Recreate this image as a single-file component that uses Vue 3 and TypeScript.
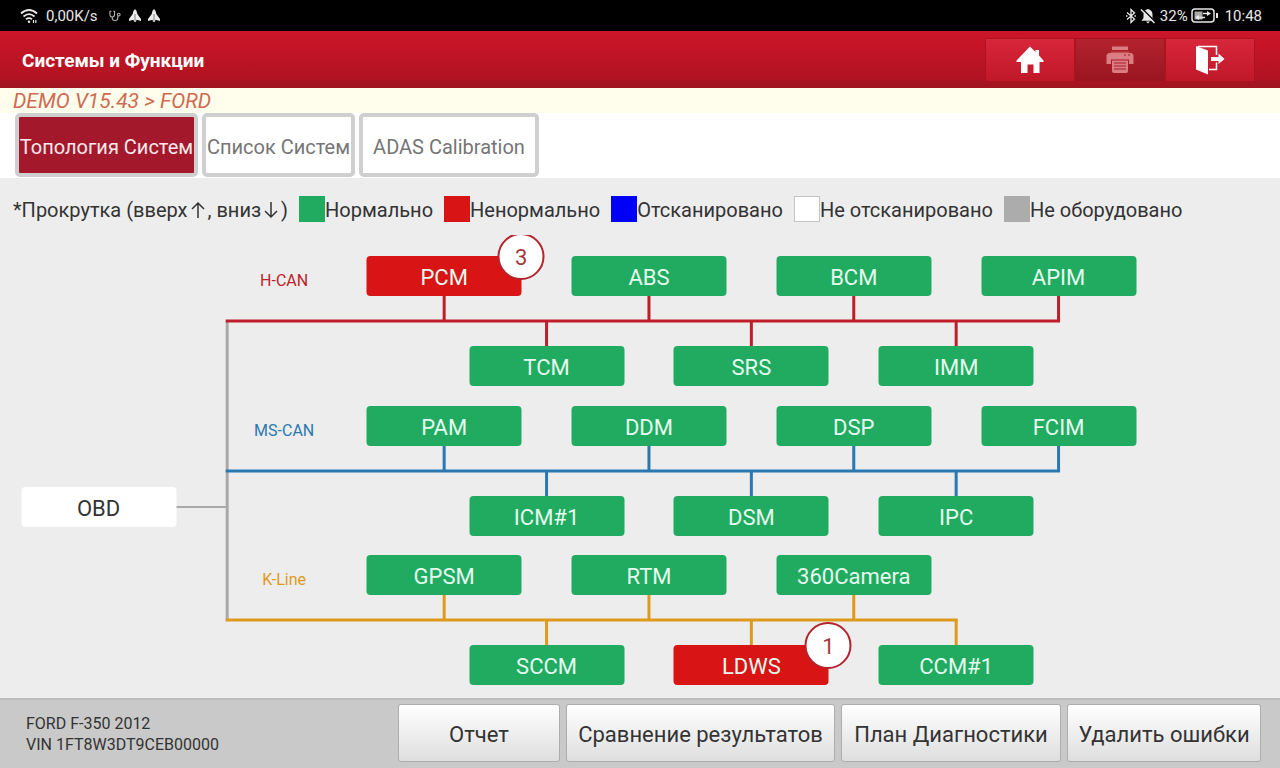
<script setup lang="ts">
type Tone = 'normal' | 'fault'

interface Unit {
  name: string
  col: number
  faults?: number
}

interface Bus {
  name: string
  color: string
  top: number
  end: number
  upper: Unit[]
  lower: Unit[]
}

const tabs = [
  { label: 'Топология Систем', size: 'first', active: true },
  { label: 'Список Систем', size: 'second', active: false },
  { label: 'ADAS Calibration', size: 'third', active: false },
]

const legend = [
  { label: 'Нормально', kind: 'normal' },
  { label: 'Ненормально', kind: 'fault' },
  { label: 'Отсканировано', kind: 'scanned' },
  { label: 'Не отсканировано', kind: 'unscanned' },
  { label: 'Не оборудовано', kind: 'absent' },
]

const buses: Bus[] = [
  {
    name: 'H-CAN', color: '#bf1e28', top: 21, end: 6,
    upper: [{ name: 'PCM', col: 0, faults: 3 }, { name: 'ABS', col: 2 }, { name: 'BCM', col: 4 }, { name: 'APIM', col: 6 }],
    lower: [{ name: 'TCM', col: 1 }, { name: 'SRS', col: 3 }, { name: 'IMM', col: 5 }],
  },
  {
    name: 'MS-CAN', color: '#2a78b0', top: 171, end: 6,
    upper: [{ name: 'PAM', col: 0 }, { name: 'DDM', col: 2 }, { name: 'DSP', col: 4 }, { name: 'FCIM', col: 6 }],
    lower: [{ name: 'ICM#1', col: 1 }, { name: 'DSM', col: 3 }, { name: 'IPC', col: 5 }],
  },
  {
    name: 'K-Line', color: '#dd9a1c', top: 320, end: 5,
    upper: [{ name: 'GPSM', col: 0 }, { name: 'RTM', col: 2 }, { name: '360Camera', col: 4 }],
    lower: [{ name: 'SCCM', col: 1 }, { name: 'LDWS', col: 3, faults: 1 }, { name: 'CCM#1', col: 5 }],
  },
]

const trunk = '17.75%'
const center = (col: number): string => `${34.7 + col * 8}%`
const place = (col: number, top: number) => ({ left: center(col), top: `${top}px` })
const tone = (u: Unit): Tone => (u.faults ? 'fault' : 'normal')

const actions = [
  { label: 'Отчет', size: 'a' },
  { label: 'Сравнение результатов', size: 'b' },
  { label: 'План Диагностики', size: 'c' },
  { label: 'Удалить ошибки', size: 'd' },
]
</script>

<template>
  <div class="screen">
    <div class="status">
      <div class="status-group">
        <svg viewBox="0 0 19 16" width="19" height="16" fill="none" stroke="#e8e8e8" stroke-width="1.8">
          <path d="M1 5.500Q9 -1.500 17 5.500M3.500 8.500Q9 3.700 14.500 8.500M6 11.300Q9 9 12 11.300" />
          <circle cx="9" cy="13.800" r="1.200" fill="#e8e8e8" stroke="none" />
          <path d="M13.500 12v3M15.800 12v3" stroke-width="1.200" />
        </svg>
        <span>0,00K/s</span>
        <svg class="scope" viewBox="0 0 14 12" width="13" height="12" fill="none" stroke="#b8b8b8" stroke-width="1.1">
          <path d="M2.500 1H1v3q0 3 2.500 3T6 4V1H4.700M3.500 7v1q0 3 3 3t3-3V6" />
          <circle cx="10.500" cy="4.500" r="1.500" />
        </svg>
        <svg v-for="n in 2" :key="n" viewBox="0 0 12 13" width="12" height="13" fill="#ececec">
          <path d="M6 0Q8 1.500 8.300 5L12 10V12L7.500 10.800 7 13H5L4.500 10.800 0 12V10L3.700 5Q4 1.500 6 0Z" />
          <path d="M6 5v8" stroke="#555" stroke-width="0.7" />
        </svg>
      </div>
      <div class="status-group right">
        <svg viewBox="0 0 10 16" width="10" height="16" fill="none" stroke="#e8e8e8" stroke-width="1.300">
          <path d="M1 4.500 8.500 11 5 14.500V1.500L8.500 5 1 11.500" />
          <path d="M0 8h1.500M8.500 8H10" />
        </svg>
        <svg viewBox="0 0 16 16" width="16" height="16">
          <path d="M8 1q4.500 1 4.500 5.500V10l2 2.800H1.500L3.500 10V6.500Q3.500 2 8 1ZM6 13.500h4L8 15.500Z" fill="#e8e8e8" />
          <path d="M2.500 1 15.500 14" stroke="#000" stroke-width="1.500" />
          <path d="M1 1.500 14.500 15" stroke="#e8e8e8" stroke-width="1.500" />
        </svg>
        <span class="percent">32%</span>
        <svg viewBox="0 0 28 15" width="28" height="15" fill="none" stroke="#e8e8e8" stroke-width="1.500">
          <rect x="1" y="1" width="22" height="13" rx="3" />
          <rect x="3.500" y="3.500" width="8" height="8" fill="#aaa" stroke="none" />
          <path d="M5 9.500h9M12 5.500h5" />
          <path d="M16 3 20 5.500 16 8ZM8 7 4 9.500 8 12Z" fill="#e8e8e8" stroke="none" />
          <path d="M26 5v5" stroke-width="2" />
        </svg>
        <time class="clock">10:48</time>
      </div>
    </div>

    <header class="header">
      <h1>Системы и Функции</h1>
      <div class="tools">
        <button type="button" aria-label="Домой">
          <svg viewBox="0 0 28 28" width="28" height="28" fill="#fff">
            <path d="M14 .500 19.500 6V4H23v5.500L27.500 14.500V16H23.500V27H17.500V18.500H11.500V27H5V16H.500V14.500Z" />
          </svg>
        </button>
        <button type="button" class="disabled" disabled aria-label="Печать">
          <svg viewBox="0 0 28 28" width="28" height="28" fill="#dc7d83">
            <path d="M6 .500h16v3.500H6ZM5 5.500H23V9H5Z" />
            <path d="M2.500 7h23l2 2v9H23V13.500H5V18H.500V9Z" />
            <path d="M4.500 6H23.500" stroke="#a51d27" stroke-width="1" />
            <path d="M6 14.500H22V25q0 2-2 2H8q-2 0-2-2Z" />
            <path d="M8 17h12M8 20h12M8 23h12" stroke="#a51d27" stroke-width="1" />
            <path d="M18 9h2M22 9h2" stroke="#a51d27" stroke-width="1" />
          </svg>
        </button>
        <button type="button" aria-label="Выход">
          <svg viewBox="0 0 30 30" width="30" height="30" fill="#fff">
            <path d="M1 1 13 5.500V29.500L1 24.500Z" />
            <path d="M3 1.500H21.500V10M21.500 17.500V24.500H14" fill="none" stroke="#fff" stroke-width="1.500" />
            <path d="M16 12H23.500V8.500L29.500 14 23.500 19V16H16Z" />
          </svg>
        </button>
      </div>
    </header>

    <div class="crumb">DEMO V15.43 &gt; FORD</div>

    <nav class="tabs">
      <button v-for="t in tabs" :key="t.label" type="button" :class="[t.size, { active: t.active }]">{{ t.label }}</button>
    </nav>

    <main class="content">
      <div class="legend">
        <span class="hint label">*Прокрутка (вверх<svg viewBox="0 0 20 20" width="20" height="20"><path d="M10 18V3M4 9l6-6 6 6" /></svg>, вниз<svg viewBox="0 0 20 20" width="20" height="20"><path d="M10 2v15M4 11l6 6 6-6" /></svg>)</span>
        <span v-for="l in legend" :key="l.kind" class="key"><i class="swatch" :class="l.kind"></i><span class="label">{{ l.label }}</span></span>
      </div>

      <div class="map">
        <svg class="wires" width="100%" height="100%" fill="none">
          <g stroke="#a9a9a9" stroke-width="3">
            <line :x1="trunk" :x2="trunk" y1="86" y2="386" />
            <line x1="13.7%" :x2="trunk" y1="272" y2="272" stroke-width="2" />
          </g>
          <g v-for="b in buses" :key="b.name" :stroke="b.color" stroke-width="3">
            <line :x1="trunk" :x2="center(b.end)" :y1="b.top + 65" :y2="b.top + 65" stroke-linecap="square" />
            <line v-for="u in b.upper" :key="u.name" :x1="center(u.col)" :x2="center(u.col)" :y1="b.top + 40" :y2="b.top + 65" />
            <line v-for="u in b.lower" :key="u.name" :x1="center(u.col)" :x2="center(u.col)" :y1="b.top + 65" :y2="b.top + 90" />
          </g>
        </svg>
        <button type="button" class="unit obd">OBD</button>
        <template v-for="b in buses" :key="b.name">
          <span class="bus-name" :style="{ color: b.color, top: `${b.top + 15}px` }">{{ b.name }}</span>
          <button v-for="u in b.upper" :key="u.name" type="button" class="unit" :class="tone(u)" :style="place(u.col, b.top)">
            {{ u.name }}<span v-if="u.faults" class="badge">{{ u.faults }}</span>
          </button>
          <button v-for="u in b.lower" :key="u.name" type="button" class="unit" :class="tone(u)" :style="place(u.col, b.top + 90)">
            {{ u.name }}<span v-if="u.faults" class="badge">{{ u.faults }}</span>
          </button>
        </template>
      </div>
    </main>

    <footer class="footer">
      <div class="vehicle">
        <div>FORD F-350 2012</div>
        <div>VIN 1FT8W3DT9CEB00000</div>
      </div>
      <div class="actions">
        <button v-for="a in actions" :key="a.label" type="button" :class="a.size">{{ a.label }}</button>
      </div>
    </footer>
  </div>
</template>

<style>
body {
  margin: 0;
  background: #ededed;
}
</style>

<style scoped>
.screen {
  display: flex;
  flex-direction: column;
  min-height: 100vh;
  background: #ededed;
  color: #333;
  font-family: Roboto, "Noto Sans", sans-serif;
  font-size: 20px;
}
button {
  box-sizing: border-box;
  margin: 0;
  padding: 0;
  font-family: inherit;
  white-space: nowrap;
}
.status {
  display: flex;
  justify-content: space-between;
  align-items: center;
  height: 31px;
  padding: 0 18px 0 20px;
  background: #000;
  color: #e8e8e8;
  font-size: 15px;
}
.status-group {
  display: flex;
  align-items: center;
  gap: 7px;
}
.scope {
  margin-left: 4px;
}
.right {
  gap: 4px;
}
.percent {
  margin-right: -1px;
}
.clock {
  margin-left: 2px;
}
.header {
  display: flex;
  justify-content: space-between;
  align-items: center;
  box-sizing: border-box;
  height: 57px;
  padding: 0 25px 0 22px;
  background: linear-gradient(#cc1629, #b31322 80%, #9d1620);
}
h1 {
  margin: 0;
  padding-top: 2px;
  color: #fff;
  font-size: 19px;
  font-weight: 700;
}
.tools {
  display: flex;
  border: 1px solid #a81521;
  border-radius: 2px;
}
.tools button {
  display: flex;
  justify-content: center;
  align-items: center;
  width: 90px;
  height: 42px;
  border: 0;
  border-right: 2px solid #a81521;
  background: linear-gradient(#d8263a, #c01829);
}
.tools button:last-child {
  width: 88px;
  border-right: 0;
}
.tools .disabled {
  background: linear-gradient(#b3232e, #99151f);
}
.crumb {
  height: 25px;
  padding-left: 13px;
  background: #fffdeb;
  color: #cf6a52;
  font-size: 21px;
  font-style: italic;
  line-height: 26px;
}
.tabs {
  display: flex;
  gap: 4px;
  height: 65px;
  padding-left: 15px;
  background: #fff;
}
.tabs button {
  height: 64px;
  padding-top: 3px;
  border: 4px solid #cfcfcf;
  border-radius: 5px;
  background: #fff;
  color: #757575;
  font-size: 20px;
}
.tabs .first {
  width: 183px;
}
.tabs .second {
  width: 153px;
}
.tabs .third {
  width: 180px;
}
.tabs .active {
  background: #a3182a;
  color: #ffe9ec;
}
.content {
  flex: 1;
}
.legend {
  display: flex;
  align-items: center;
  gap: 11px;
  height: 57px;
  padding: 4px 13px 0;
  box-sizing: border-box;
  white-space: nowrap;
}
.key,
.hint {
  display: flex;
  align-items: center;
}
.label {
  padding-top: 3px;
}
.hint svg {
  fill: none;
  stroke: #333;
  stroke-width: 1.5;
}
.hint {
  white-space: pre;
}
.swatch {
  width: 26px;
  height: 26px;
  box-sizing: border-box;
}
.normal {
  background: #20ab60;
}
.fault {
  background: #d91414;
}
.scanned {
  background: #0000fa;
}
.unscanned {
  border: 1px solid #c4c4c4;
  background: #fff;
}
.absent {
  background: #acacac;
}
.map {
  position: relative;
  height: 463px;
  overflow: hidden;
}
.wires {
  display: block;
}
.unit {
  position: absolute;
  width: 155px;
  height: 40px;
  padding-top: 3px;
  border: 0;
  border-radius: 4px;
  color: #e6fbef;
  font-size: 22px;
  transform: translateX(-50%);
}
.obd {
  top: 252px;
  left: 7.7%;
  background: #fff;
  color: #333;
}
.bus-name {
  position: absolute;
  left: 22.2%;
  font-size: 16px;
  line-height: 20px;
  transform: translateX(-50%);
}
.badge {
  position: absolute;
  top: -23px;
  right: -23px;
  box-sizing: border-box;
  width: 47px;
  height: 47px;
  border: 2px solid #b3242c;
  border-radius: 50%;
  background: #fff;
  color: #a5383f;
  line-height: 46px;
  text-align: center;
}
.footer {
  display: flex;
  justify-content: space-between;
  box-sizing: border-box;
  height: 70px;
  padding: 4px 19px 0 26px;
  border-top: 2px solid #bdbdbd;
  background: #c9c9c9;
}
.vehicle {
  padding-top: 9px;
  font-size: 16px;
  line-height: 21px;
}
.actions {
  display: flex;
  gap: 6px;
}
.actions button {
  height: 58px;
  padding-top: 3px;
  border: 1px solid #adadad;
  border-radius: 3px;
  background: linear-gradient(#fff, #dedede);
  color: #333;
  font-size: 22px;
}
.actions .a {
  width: 162px;
}
.actions .b {
  width: 269px;
}
.actions .c {
  width: 220px;
}
.actions .d {
  width: 194px;
}
</style>
